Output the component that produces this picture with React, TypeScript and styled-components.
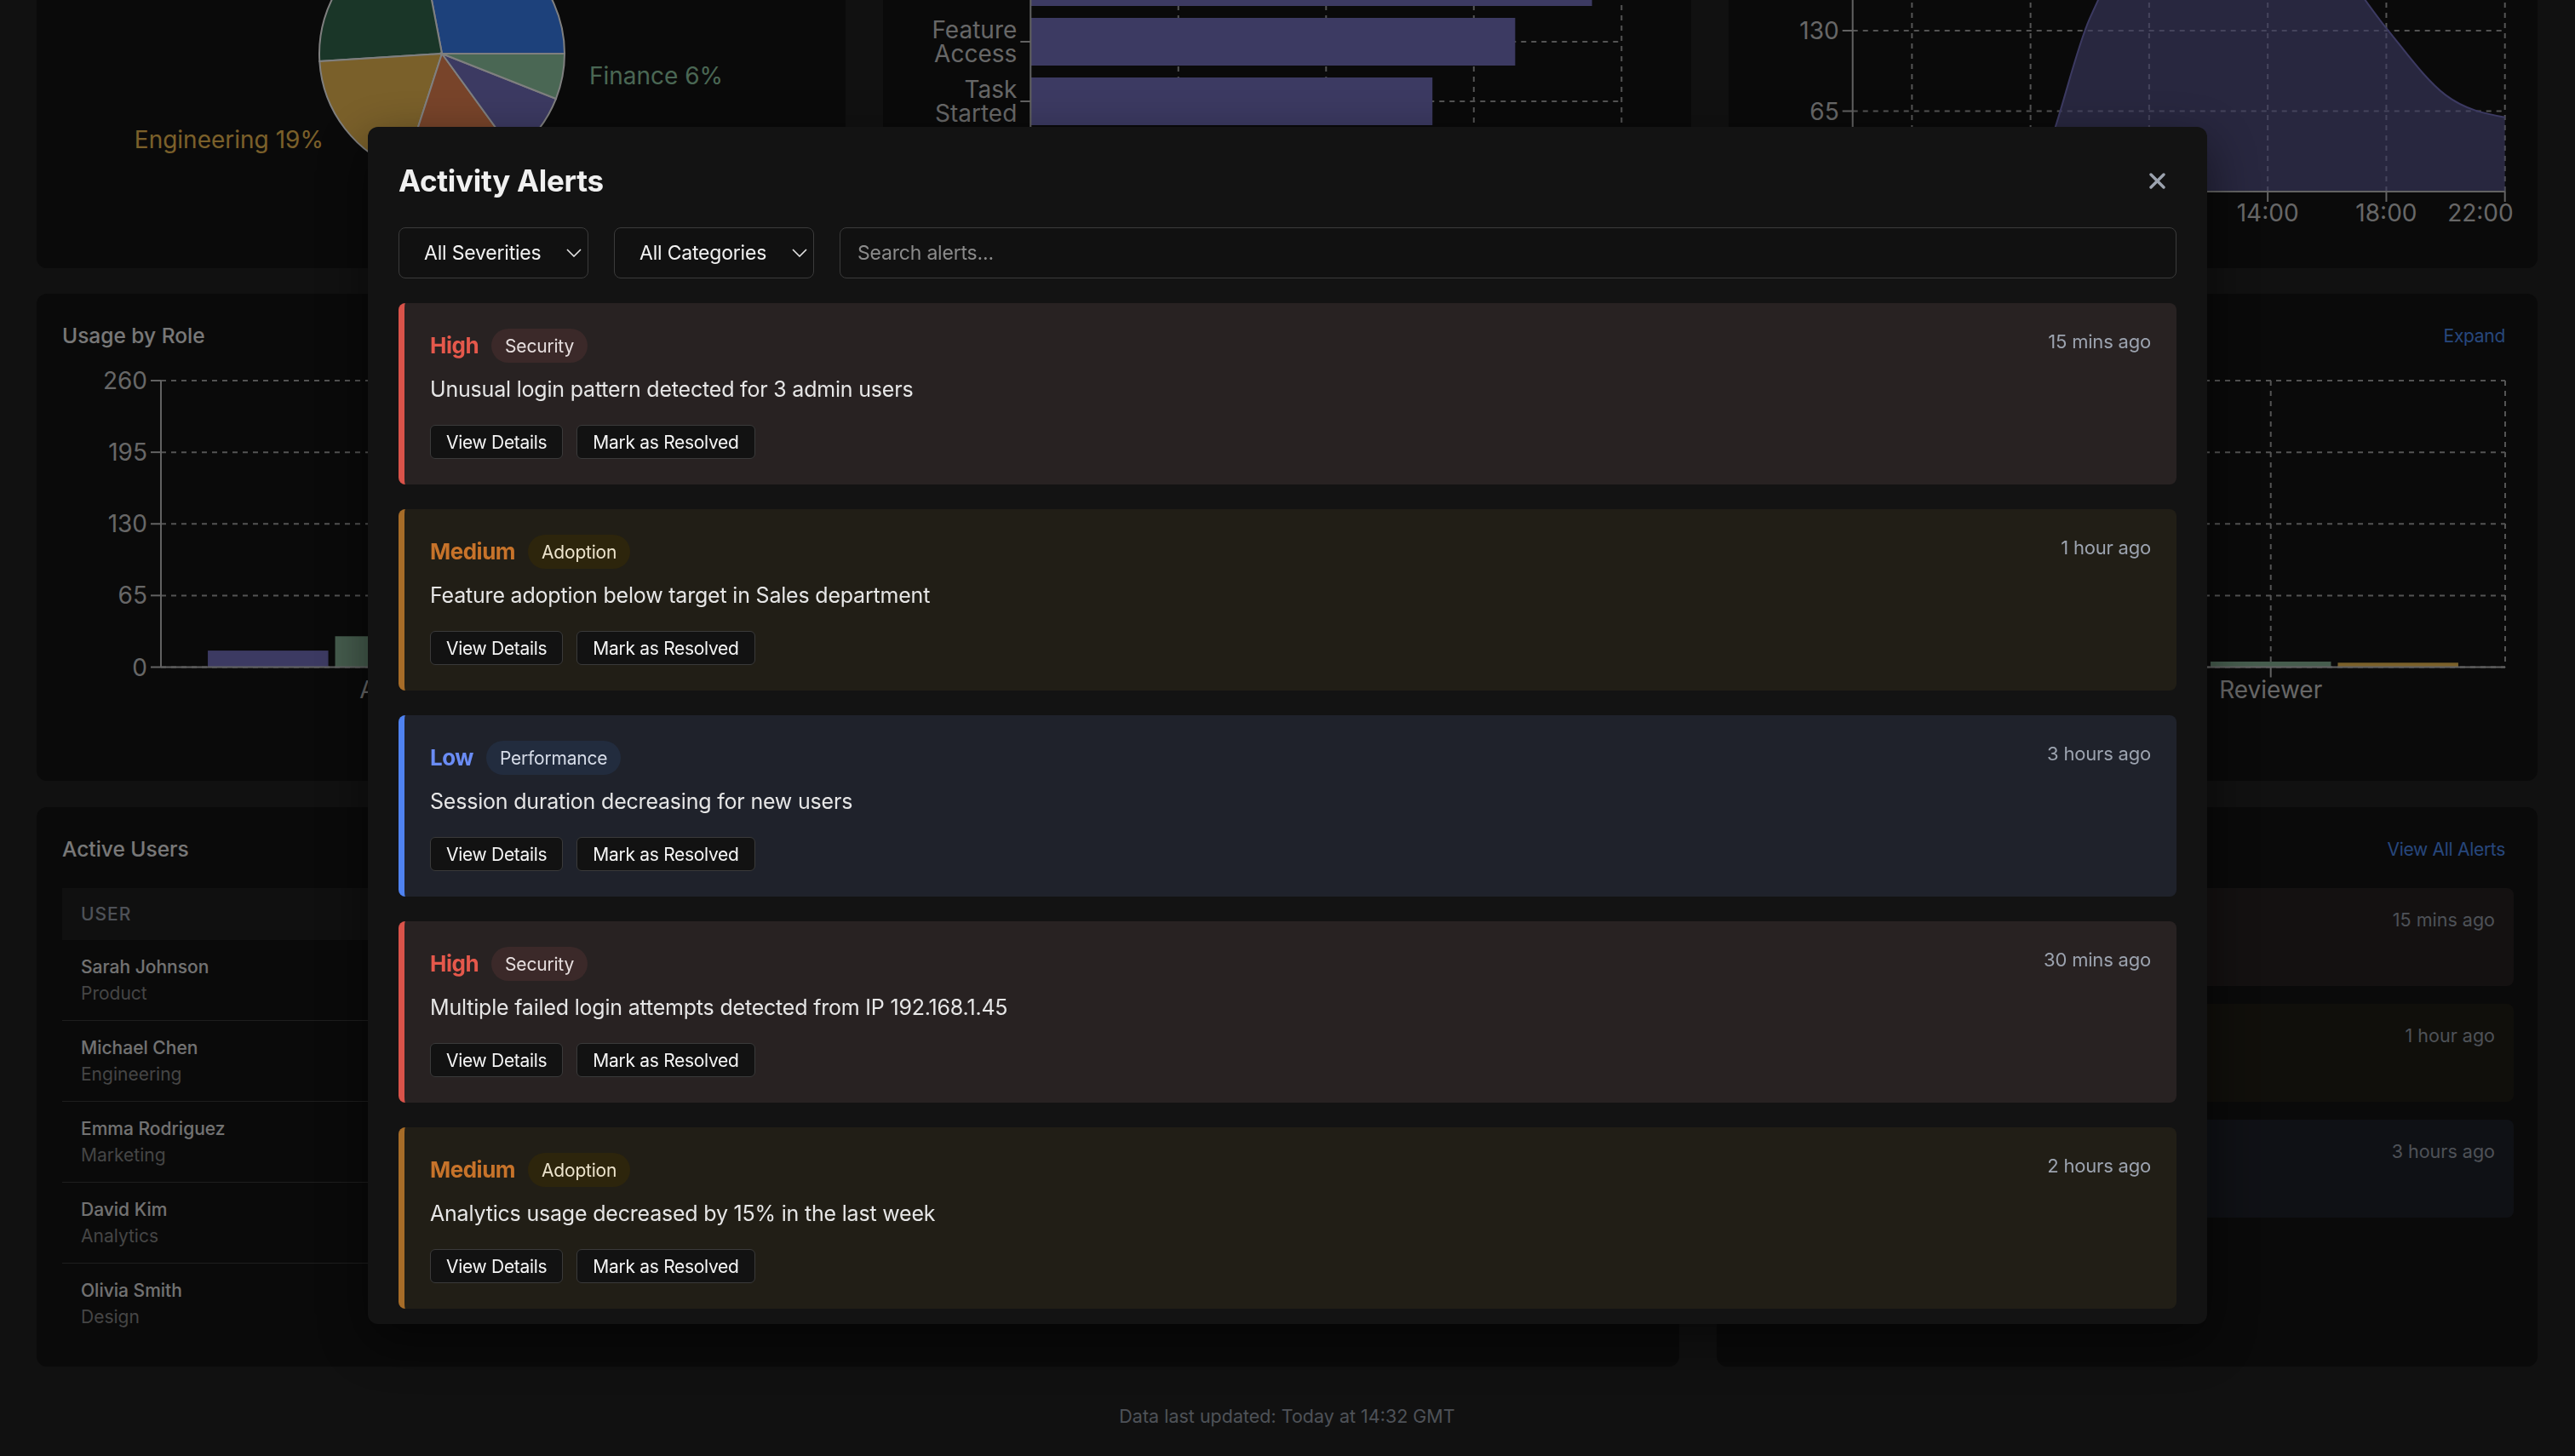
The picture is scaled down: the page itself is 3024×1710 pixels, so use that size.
import React from 'react';
import styled, { createGlobalStyle } from 'styled-components';

type Severity = 'high' | 'medium' | 'low';

const SEV: Record<Severity, { bar: string; label: string; bg: string; badge: string; badgeText: string; name: string }> = {
  high: { bar: '#d9534a', label: '#e5584b', bg: '#282222', badge: '#3b2929', badgeText: '#e6dede', name: 'High' },
  medium: { bar: '#a66c28', label: '#c7732a', bg: '#211e16', badge: '#2d250c', badgeText: '#ece3cc', name: 'Medium' },
  low: { bar: '#4f82f0', label: '#6a8cf5', bg: '#1f222b', badge: '#222c3e', badgeText: '#d6dce8', name: 'Low' },
};

const GRID = '#a8a8a8';
const AXIS = '#c4c4c4';
const TICK = '#cfcfcf';
const PURPLE = '#7874c4';
const GREEN = '#8cba9c';
const GOLD = '#f4c054';

const GlobalStyle = createGlobalStyle`
  *, *::before, *::after { box-sizing: border-box; }
  html, body { margin: 0; padding: 0; }
  body {
    background: #222222;
    font-family: Inter, "Liberation Sans", Arial, sans-serif;
    -webkit-font-smoothing: antialiased;
  }
  button, input, select { font-family: inherit; }
`;

/* ---------- dashboard (behind the dialog) ---------- */

const Viewport = styled.div`
  height: 100vh;
  overflow: hidden;
  display: flex;
  flex-direction: column;
  justify-content: flex-end;
  background: #222222;
`;

const Page = styled.main`
  flex-shrink: 0;
  display: flex;
  flex-direction: column;
  padding: 43px 44px 30px 43px;
`;

const PageHeader = styled.header`
  display: flex;
  justify-content: space-between;
  align-items: flex-end;
  margin-bottom: 40px;
`;

const PageTitle = styled.h1`
  margin: 0;
  font-size: 48px;
  font-weight: 700;
  color: #f5f5f5;
`;

const PageSubtitle = styled.p`
  margin: 8px 0 0;
  font-size: 24px;
  color: #9ca3af;
`;

const Row = styled.div<{ $cols: string; $mb?: number }>`
  display: grid;
  grid-template-columns: ${p => p.$cols};
  gap: 44px;
  margin-bottom: ${p => p.$mb ?? 0}px;
`;

const Card = styled.section<{ $height: number }>`
  height: ${p => p.$height}px;
  min-width: 0;
  background: #141414;
  border-radius: 12px;
  padding: 30px 28px 30px 30px;
  display: flex;
  flex-direction: column;
`;

const CardHeader = styled.div`
  display: flex;
  justify-content: space-between;
  align-items: center;
  height: 39px;
  margin-bottom: 24px;
`;

const CardTitle = styled.h2`
  margin: 0;
  font-size: 24.5px;
  font-weight: 500;
  line-height: 39px;
  color: #f0f0f0;
`;

const GhostLink = styled.button`
  background: none;
  border: none;
  padding: 0 10px;
  font-size: 21px;
  line-height: 39px;
  letter-spacing: -0.3px;
  color: #4f8ff7;
  cursor: pointer;
`;

const ChartSvg = styled.svg`
  display: block;
  overflow: visible;
  flex-shrink: 0;
`;

const Footer = styled.footer`
  margin-top: 42px;
  text-align: center;
  font-size: 21.5px;
  line-height: 33px;
  color: #9ca3af;
`;

const UsersTable = styled.table`
  width: 100%;
  margin-top: 2px;
  border-collapse: collapse;
  table-layout: fixed;
`;

const Th = styled.th`
  height: 61px;
  padding: 0 22px;
  background: #202020;
  text-align: left;
  font-size: 21px;
  font-weight: 500;
  letter-spacing: 1px;
  text-transform: uppercase;
  color: #9ca3af;
`;

const Tr = styled.tr`
  &:not(:last-child) td { border-bottom: 1px solid #3c3c3c; }
`;

const Td = styled.td`
  padding: 16px 22px;
  vertical-align: middle;
  font-size: 21px;
  color: #d4d4d4;
`;

const UserName = styled.div`
  font-size: 21px;
  font-weight: 500;
  line-height: 31px;
  color: #e5e5e5;
`;

const UserDept = styled.div`
  font-size: 21px;
  line-height: 31px;
  color: #8a8a8a;
`;

const MiniList = styled.div`
  display: flex;
  flex-direction: column;
  gap: 21px;
  margin-top: 2px;
`;

const MiniAlert = styled.div<{ $sev: Severity }>`
  background: ${p => SEV[p.$sev].bg};
  border-left: 7px solid ${p => SEV[p.$sev].bar};
  border-radius: 8px;
  padding: 22px 22px 22px 24px;
`;

const MiniTop = styled.div`
  display: flex;
  justify-content: space-between;
  line-height: 31px;
  font-size: 21.5px;
`;

const MiniSeverity = styled.span<{ $sev: Severity }>`
  font-weight: 700;
  color: ${p => SEV[p.$sev].label};
`;

const MiniTime = styled.span`
  color: #9ca3af;
`;

const MiniMessage = styled.div`
  margin-top: 8px;
  font-size: 20px;
  line-height: 32px;
  color: #e0e0e0;
`;

/* ---------- dialog ---------- */

const Overlay = styled.div`
  position: fixed;
  inset: 0;
  background: rgba(0, 0, 0, 0.5);
  display: flex;
  align-items: center;
  justify-content: center;
  padding-bottom: 6px;
`;

const Modal = styled.div`
  width: 2160px;
  background: #131313;
  border-radius: 12px;
  padding: 40px 36px 18px;
  box-shadow: 0 20px 60px rgba(0, 0, 0, 0.5);
`;

const ModalHeader = styled.div`
  display: flex;
  justify-content: space-between;
  align-items: center;
  height: 46px;
  margin-bottom: 32px;
`;

const ModalTitle = styled.h2`
  margin: 0;
  font-size: 35px;
  font-weight: 700;
  line-height: 46px;
  color: #f0f0f0;
  letter-spacing: -0.3px;
`;

const CloseButton = styled.button`
  width: 46px;
  height: 40px;
  display: flex;
  align-items: center;
  justify-content: center;
  background: none;
  border: none;
  padding: 0;
  cursor: pointer;
`;

const FilterBar = styled.div`
  display: flex;
  gap: 30px;
  height: 60px;
  margin-bottom: 29px;
`;

const SelectWrap = styled.div`
  position: relative;
  flex-shrink: 0;
`;

const Select = styled.select`
  appearance: none;
  height: 60px;
  padding: 0 54px 0 29px;
  font-size: 23px;
  color: #f2f2f2;
  background: #111111;
  border: 1px solid #3b3b3b;
  border-radius: 8px;
  letter-spacing: -0.2px;
`;

const Chevron = styled.svg`
  position: absolute;
  right: 8px;
  top: 50%;
  transform: translateY(-50%);
  pointer-events: none;
`;

const SearchInput = styled.input`
  flex: 1;
  height: 60px;
  padding: 0 20px;
  font-size: 23px;
  color: #f2f2f2;
  background: #111111;
  border: 1px solid #3b3b3b;
  border-radius: 8px;
  outline: none;
  letter-spacing: -0.2px;
  &::placeholder { color: #8b8b8b; }
`;

const AlertList = styled.div`
  display: flex;
  flex-direction: column;
  gap: 29px;
`;

const AlertCard = styled.article<{ $sev: Severity }>`
  background: ${p => SEV[p.$sev].bg};
  border-left: 7px solid ${p => SEV[p.$sev].bar};
  border-radius: 8px;
  padding: 30px;
`;

const AlertHead = styled.div`
  display: flex;
  justify-content: space-between;
  align-items: flex-start;
`;

const SeverityGroup = styled.div`
  display: flex;
  align-items: center;
  gap: 15px;
  height: 40px;
`;

const SeverityLabel = styled.span<{ $sev: Severity }>`
  font-size: 26px;
  font-weight: 700;
  line-height: 40px;
  color: ${p => SEV[p.$sev].label};
  letter-spacing: -0.5px;
`;

const Badge = styled.span<{ $sev: Severity }>`
  height: 40px;
  display: inline-flex;
  align-items: center;
  padding: 0 16px;
  border-radius: 20px;
  font-size: 21px;
  background: ${p => SEV[p.$sev].badge};
  color: ${p => SEV[p.$sev].badgeText};
  letter-spacing: -0.2px;
`;

const TimeText = styled.span`
  font-size: 22px;
  line-height: 31px;
  color: #9ca3af;
  letter-spacing: -0.2px;
`;

const Message = styled.p`
  margin: 12px 0 0;
  font-size: 25px;
  line-height: 39px;
  color: #e6e6e6;
  letter-spacing: -0.2px;
`;

const Actions = styled.div`
  display: flex;
  gap: 16px;
  margin-top: 22px;
`;

const ActionButton = styled.button`
  height: 40px;
  padding: 0 18px;
  font-size: 21px;
  color: #f5f5f5;
  background: #121212;
  border: 1px solid #3a3a3a;
  border-radius: 6px;
  letter-spacing: -0.3px;
  cursor: pointer;
`;

/* ---------- data ---------- */

const alerts: { sev: Severity; category: string; message: string; time: string }[] = [
  { sev: 'high', category: 'Security', message: 'Unusual login pattern detected for 3 admin users', time: '15 mins ago' },
  { sev: 'medium', category: 'Adoption', message: 'Feature adoption below target in Sales department', time: '1 hour ago' },
  { sev: 'low', category: 'Performance', message: 'Session duration decreasing for new users', time: '3 hours ago' },
  { sev: 'high', category: 'Security', message: 'Multiple failed login attempts detected from IP 192.168.1.45', time: '30 mins ago' },
  { sev: 'medium', category: 'Adoption', message: 'Analytics usage decreased by 15% in the last week', time: '2 hours ago' },
];

const users = [
  { name: 'Sarah Johnson', dept: 'Product', role: 'Admin', last: '2 mins ago', sessions: 48 },
  { name: 'Michael Chen', dept: 'Engineering', role: 'Editor', last: '12 mins ago', sessions: 36 },
  { name: 'Emma Rodriguez', dept: 'Marketing', role: 'Analyst', last: '25 mins ago', sessions: 29 },
  { name: 'David Kim', dept: 'Analytics', role: 'Analyst', last: '1 hour ago', sessions: 22 },
  { name: 'Olivia Smith', dept: 'Design', role: 'Reviewer', last: '2 hours ago', sessions: 17 },
];

const pieData = [
  { name: 'Product', value: 28, color: '#3b82f6' },
  { name: 'Marketing', value: 23, color: '#346c50' },
  { name: 'Engineering', value: 19, color: '#f4c054' },
  { name: 'Sales', value: 15, color: '#f08854' },
  { name: 'Design', value: 9, color: PURPLE },
  { name: 'Finance', value: 6, color: '#94cea8' },
];

const funnel = [
  { name: 'Page Visit', value: 100 },
  { name: 'Login', value: 95 },
  { name: 'Feature Access', value: 82 },
  { name: 'Task Started', value: 68 },
  { name: 'Task Completed', value: 54 },
];

const hourly = [5, 3, 4, 12, 140, 225, 250, 235, 195, 132, 78, 60];

const roles = [
  { name: 'Admin', values: [15, 28, 12] },
  { name: 'Manager', values: [150, 120, 85] },
  { name: 'Analyst', values: [245, 200, 160] },
  { name: 'Editor', values: [110, 90, 60] },
  { name: 'Reviewer', values: [20, 5, 4] },
];

const CH = 449;
const CHART_W = 891.7;

/* ---------- charts ---------- */

function PieChart() {
  const cx = 446;
  const cy = 227;
  const r = 144;
  const lr = 176;
  const total = pieData.reduce((s, d) => s + d.value, 0);
  let acc = 0;
  const rad = (a: number) => (a * Math.PI) / 180;
  const pt = (a: number, rr: number) => [cx + rr * Math.cos(rad(a)), cy - rr * Math.sin(rad(a))];
  return (
    <ChartSvg width="100%" height={CH}>
      {pieData.map(d => {
        const a0 = (acc / total) * 360;
        acc += d.value;
        const a1 = (acc / total) * 360;
        const [x0, y0] = pt(a0, r);
        const [x1, y1] = pt(a1, r);
        const large = a1 - a0 > 180 ? 1 : 0;
        const mid = (a0 + a1) / 2;
        const [lx, ly] = pt(mid, lr);
        const anchor = Math.cos(rad(mid)) >= 0 ? 'start' : 'end';
        return (
          <g key={d.name}>
            <path d={`M${cx},${cy} L${x0},${y0} A${r},${r} 0 ${large} 0 ${x1},${y1} Z`} fill={d.color} stroke="#ffffff" strokeWidth={2} />
            <text x={lx} y={ly + 3} textAnchor={anchor} fill={d.color} fontSize={28}>
              {`${d.name} ${d.value}%`}
            </text>
          </g>
        );
      })}
    </ChartSvg>
  );
}

function FunnelChart() {
  const axisX = 143.3;
  const right = 837.3;
  const top = 38;
  const band = 70;
  const bottom = top + band * funnel.length;
  const sx = (v: number) => axisX + ((right - axisX) * v) / 100;
  return (
    <ChartSvg width="100%" height={CH}>
      {[25, 50, 75, 100].map(v => (
        <line key={v} x1={sx(v)} x2={sx(v)} y1={top} y2={bottom} stroke={GRID} strokeDasharray="6 6" strokeWidth={2} />
      ))}
      {funnel.map((d, i) => {
        const c = top + band * i + band / 2;
        return <line key={d.name} x1={axisX} x2={right} y1={c} y2={c} stroke={GRID} strokeDasharray="6 6" strokeWidth={2} />;
      })}
      {funnel.map((d, i) => {
        const c = top + band * i + band / 2;
        const words = d.name.split(' ');
        return (
          <g key={d.name}>
            <rect x={axisX} y={c - 28} width={sx(d.value) - axisX} height={56} fill={PURPLE} />
            <line x1={axisX - 12} x2={axisX} y1={c} y2={c} stroke={AXIS} strokeWidth={2} />
            <text textAnchor="end" fill={TICK} fontSize={28}>
              {words.map((w, k) => (
                <tspan key={w} x={axisX - 16} y={c + 10 - (words.length - 1) * 14 + k * 28}>
                  {w}
                </tspan>
              ))}
            </text>
          </g>
        );
      })}
      <line x1={axisX} x2={axisX} y1={top} y2={bottom} stroke={AXIS} strokeWidth={2} />
      <line x1={axisX} x2={right} y1={bottom} y2={bottom} stroke={AXIS} strokeWidth={2} />
      {[0, 25, 50, 75, 100].map(v => (
        <text key={v} x={sx(v)} y={bottom + 36} textAnchor="middle" fill={TICK} fontSize={28}>
          {v}%
        </text>
      ))}
    </ChartSvg>
  );
}

function monotonePath(pts: [number, number][]): string {
  const n = pts.length;
  const dx: number[] = [];
  const m: number[] = [];
  for (let i = 0; i < n - 1; i++) {
    dx[i] = pts[i + 1][0] - pts[i][0];
    m[i] = (pts[i + 1][1] - pts[i][1]) / dx[i];
  }
  const t: number[] = new Array(n).fill(0);
  for (let i = 1; i < n - 1; i++) {
    if (m[i - 1] * m[i] <= 0) {
      t[i] = 0;
    } else {
      const p = (m[i - 1] * dx[i] + m[i] * dx[i - 1]) / (dx[i - 1] + dx[i]);
      t[i] = (Math.sign(m[i - 1]) + Math.sign(m[i])) * Math.min(Math.abs(m[i - 1]), Math.abs(m[i]), 0.5 * Math.abs(p));
    }
  }
  t[0] = (3 * m[0] - t[1]) / 2;
  t[n - 1] = (3 * m[n - 2] - t[n - 2]) / 2;
  let d = `M${pts[0][0]},${pts[0][1]}`;
  for (let i = 0; i < n - 1; i++) {
    const h = dx[i] / 3;
    d += ` C${pts[i][0] + h},${pts[i][1] + h * t[i]} ${pts[i + 1][0] - h},${pts[i + 1][1] - h * t[i + 1]} ${pts[i + 1][0]},${pts[i + 1][1]}`;
  }
  return d;
}

function AreaChart() {
  const axisX = 115.7;
  const right = 881.7;
  const base = 389;
  const k = 94.5 / 65;
  const step = (right - axisX) / (hourly.length - 1);
  const pts: [number, number][] = hourly.map((v, i) => [axisX + i * step, base - v * k]);
  const line = monotonePath(pts);
  const area = `${line} L${right},${base} L${axisX},${base} Z`;
  const yTicks = [0, 65, 130, 195, 260];
  const xTicks = [1, 3, 5, 7, 9, 11];
  const last = xTicks[xTicks.length - 1];
  return (
    <ChartSvg width="100%" height={CH}>
      {yTicks.map(v => (
        <line key={v} x1={axisX} x2={right} y1={base - v * k} y2={base - v * k} stroke={GRID} strokeDasharray="6 6" strokeWidth={2} />
      ))}
      {xTicks.map(i => (
        <line key={i} x1={axisX + i * step} x2={axisX + i * step} y1={base - 260 * k} y2={base} stroke={GRID} strokeDasharray="6 6" strokeWidth={2} />
      ))}
      <path d={area} fill={PURPLE} fillOpacity={0.6} stroke="none" />
      <path d={line} fill="none" stroke={PURPLE} strokeWidth={2} />
      <line x1={axisX} x2={axisX} y1={base - 260 * k} y2={base} stroke={AXIS} strokeWidth={2} />
      <line x1={axisX} x2={right} y1={base} y2={base} stroke={AXIS} strokeWidth={2} />
      {yTicks.map(v => (
        <g key={v}>
          <line x1={axisX - 12} x2={axisX} y1={base - v * k} y2={base - v * k} stroke={AXIS} strokeWidth={2} />
          <text x={axisX - 16} y={base - v * k + 10} textAnchor="end" fill={TICK} fontSize={28}>
            {v}
          </text>
        </g>
      ))}
      {xTicks.map(i => (
        <g key={i}>
          <line x1={axisX + i * step} x2={axisX + i * step} y1={base} y2={base + 12} stroke={AXIS} strokeWidth={2} />
          <text
            x={i === last ? CHART_W : axisX + i * step}
            y={base + 35}
            textAnchor={i === last ? 'end' : 'middle'}
            fill={TICK}
            fontSize={28}
          >
            {`${String(i * 2).padStart(2, '0')}:00`}
          </text>
        </g>
      ))}
    </ChartSvg>
  );
}

function UsageChart() {
  const axisX = 116;
  const right = 2869;
  const top = 9;
  const base = 345.5;
  const k = (base - top) / 260;
  const band = (right - axisX) / roles.length;
  const catGap = band * 0.1;
  const barGap = 8;
  const barW = (band - 2 * catGap - 2 * barGap) / 3;
  const colors = [PURPLE, GREEN, GOLD];
  const yTicks = [0, 65, 130, 195, 260];
  return (
    <ChartSvg width="100%" height={CH}>
      {yTicks.map(v => (
        <line key={v} x1={axisX} x2={right} y1={base - v * k} y2={base - v * k} stroke={GRID} strokeDasharray="6 6" strokeWidth={2} />
      ))}
      {roles.map((r, i) => (
        <line key={r.name} x1={axisX + band * (i + 0.5)} x2={axisX + band * (i + 0.5)} y1={top} y2={base} stroke={GRID} strokeDasharray="6 6" strokeWidth={2} />
      ))}
      <line x1={right} x2={right} y1={top} y2={base} stroke={GRID} strokeDasharray="6 6" strokeWidth={2} />
      {roles.map((r, i) =>
        r.values.map((v, j) => (
          <rect
            key={`${r.name}-${j}`}
            x={axisX + band * i + catGap + j * (barW + barGap)}
            y={base - v * k}
            width={barW}
            height={v * k}
            fill={colors[j]}
          />
        ))
      )}
      <line x1={axisX} x2={axisX} y1={top} y2={base} stroke={AXIS} strokeWidth={2} />
      <line x1={axisX} x2={right} y1={base} y2={base} stroke={AXIS} strokeWidth={2} />
      {yTicks.map(v => (
        <g key={v}>
          <line x1={axisX - 12} x2={axisX} y1={base - v * k} y2={base - v * k} stroke={AXIS} strokeWidth={2} />
          <text x={axisX - 16} y={base - v * k + 10} textAnchor="end" fill={TICK} fontSize={28}>
            {v}
          </text>
        </g>
      ))}
      {roles.map((r, i) => (
        <g key={r.name}>
          <line x1={axisX + band * (i + 0.5)} x2={axisX + band * (i + 0.5)} y1={base} y2={base + 12} stroke={AXIS} strokeWidth={2} />
          <text x={axisX + band * (i + 0.5)} y={base + 36} textAnchor="middle" fill={TICK} fontSize={28}>
            {r.name}
          </text>
        </g>
      ))}
    </ChartSvg>
  );
}

/* ---------- app ---------- */

export default function App() {
  return (
    <>
      <GlobalStyle />
      <Viewport>
        <Page>
          <PageHeader>
            <div>
              <PageTitle>User Activity Analytics</PageTitle>
              <PageSubtitle>Monitor engagement, adoption and alerts across your organisation</PageSubtitle>
            </div>
          </PageHeader>

          <Row $cols="1fr 1fr 1fr" $mb={30}>
            <Card $height={572}>
              <CardHeader>
                <CardTitle>Usage by Department</CardTitle>
              </CardHeader>
              <PieChart />
            </Card>
            <Card $height={572}>
              <CardHeader>
                <CardTitle>Feature Adoption Funnel</CardTitle>
              </CardHeader>
              <FunnelChart />
            </Card>
            <Card $height={572}>
              <CardHeader>
                <CardTitle>Activity by Hour</CardTitle>
              </CardHeader>
              <AreaChart />
            </Card>
          </Row>

          <Row $cols="1fr" $mb={31}>
            <Card $height={572}>
              <CardHeader>
                <CardTitle>Usage by Role</CardTitle>
                <GhostLink>Expand</GhostLink>
              </CardHeader>
              <UsageChart />
            </Card>
          </Row>

          <Row $cols="2fr 1fr">
            <Card $height={657}>
              <CardHeader>
                <CardTitle>Active Users</CardTitle>
              </CardHeader>
              <UsersTable>
                <thead>
                  <tr>
                    <Th style={{ width: '40%' }}>User</Th>
                    <Th>Role</Th>
                    <Th>Last Active</Th>
                    <Th>Sessions</Th>
                  </tr>
                </thead>
                <tbody>
                  {users.map(u => (
                    <Tr key={u.name}>
                      <Td>
                        <UserName>{u.name}</UserName>
                        <UserDept>{u.dept}</UserDept>
                      </Td>
                      <Td>{u.role}</Td>
                      <Td>{u.last}</Td>
                      <Td>{u.sessions}</Td>
                    </Tr>
                  ))}
                </tbody>
              </UsersTable>
            </Card>
            <Card $height={657}>
              <CardHeader>
                <CardTitle>Recent Alerts</CardTitle>
                <GhostLink>View All Alerts</GhostLink>
              </CardHeader>
              <MiniList>
                {alerts.slice(0, 3).map(a => (
                  <MiniAlert key={a.message} $sev={a.sev}>
                    <MiniTop>
                      <MiniSeverity $sev={a.sev}>{SEV[a.sev].name}</MiniSeverity>
                      <MiniTime>{a.time}</MiniTime>
                    </MiniTop>
                    <MiniMessage>{a.category} alert</MiniMessage>
                  </MiniAlert>
                ))}
              </MiniList>
            </Card>
          </Row>

          <Footer>Data last updated: Today at 14:32 GMT</Footer>
        </Page>
      </Viewport>

      <Overlay>
        <Modal role="dialog" aria-modal="true" aria-label="Activity Alerts">
          <ModalHeader>
            <ModalTitle>Activity Alerts</ModalTitle>
            <CloseButton aria-label="Close">
              <svg width="19" height="19" viewBox="0 0 19 19">
                <path d="M2 2 L17 17 M17 2 L2 17" stroke="#9ca3af" strokeWidth="3.4" strokeLinecap="round" />
              </svg>
            </CloseButton>
          </ModalHeader>

          <FilterBar>
            <SelectWrap>
              <Select defaultValue="all">
                <option value="all">All Severities</option>
                <option value="high">High</option>
                <option value="medium">Medium</option>
                <option value="low">Low</option>
              </Select>
              <Chevron width="18" height="10" viewBox="0 0 18 10">
                <polyline points="1,1 9,9 17,1" fill="none" stroke="#e5e5e5" strokeWidth="1.6" />
              </Chevron>
            </SelectWrap>
            <SelectWrap>
              <Select defaultValue="all">
                <option value="all">All Categories</option>
                <option value="security">Security</option>
                <option value="adoption">Adoption</option>
                <option value="performance">Performance</option>
              </Select>
              <Chevron width="18" height="10" viewBox="0 0 18 10">
                <polyline points="1,1 9,9 17,1" fill="none" stroke="#e5e5e5" strokeWidth="1.6" />
              </Chevron>
            </SelectWrap>
            <SearchInput placeholder="Search alerts..." />
          </FilterBar>

          <AlertList>
            {alerts.map(a => (
              <AlertCard key={a.message} $sev={a.sev}>
                <AlertHead>
                  <SeverityGroup>
                    <SeverityLabel $sev={a.sev}>{SEV[a.sev].name}</SeverityLabel>
                    <Badge $sev={a.sev}>{a.category}</Badge>
                  </SeverityGroup>
                  <TimeText>{a.time}</TimeText>
                </AlertHead>
                <Message>{a.message}</Message>
                <Actions>
                  <ActionButton>View Details</ActionButton>
                  <ActionButton>Mark as Resolved</ActionButton>
                </Actions>
              </AlertCard>
            ))}
          </AlertList>
        </Modal>
      </Overlay>
    </>
  );
}
